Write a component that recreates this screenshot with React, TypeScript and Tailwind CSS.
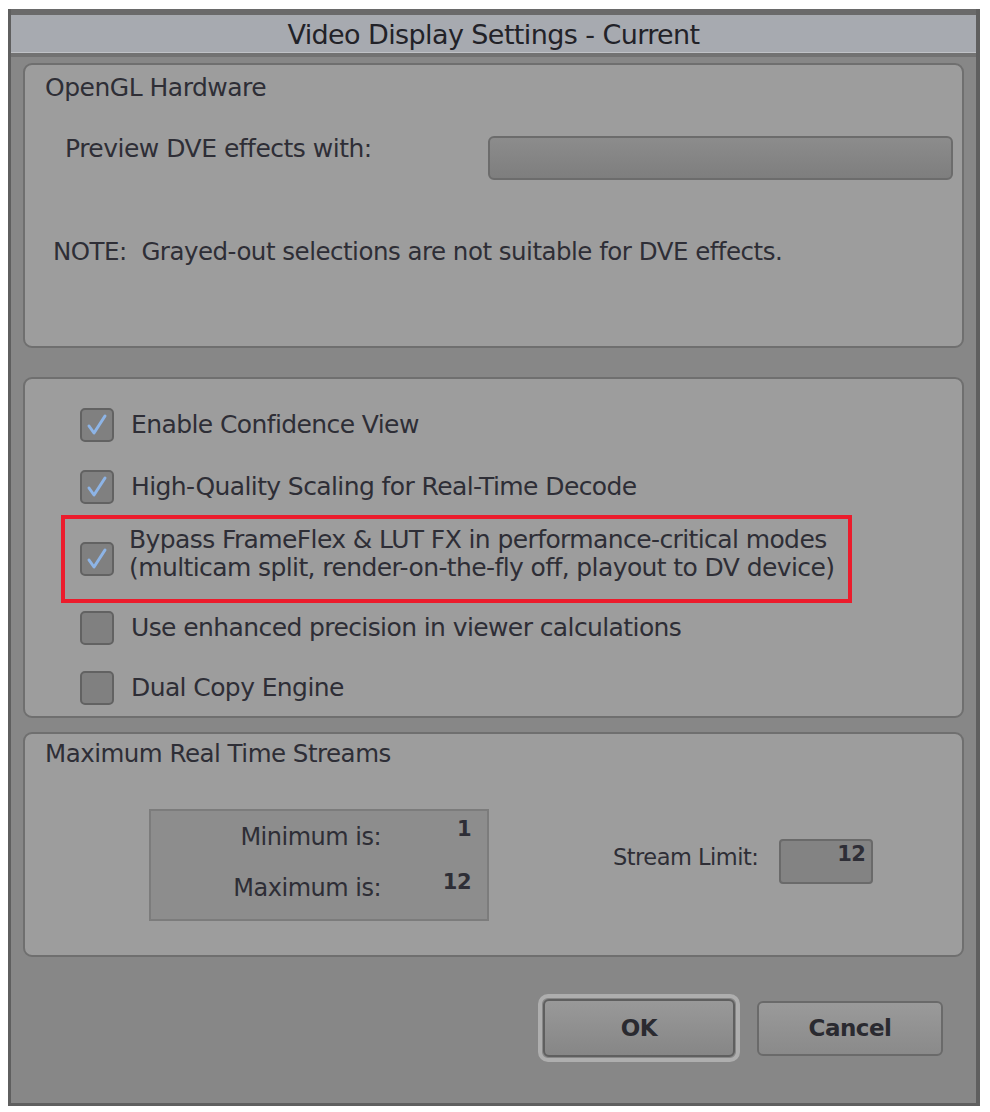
import { FC } from "react";

const font = { fontFamily: '"DejaVu Sans", Verdana, sans-serif' };

const Check: FC<{ checked?: boolean }> = ({ checked }) => (
	<div className="w-[34px] h-[34px] shrink-0 rounded-[5px] border-2 border-[#626262] bg-[#808080] flex items-center justify-center">
		{checked && (
			<svg width="26" height="26" viewBox="0 0 26 26">
				<path
					d="M5 14 L10 21 L21 4"
					fill="none"
					stroke="#8db4e6"
					strokeWidth="3"
					strokeLinecap="round"
					strokeLinejoin="round"
				/>
			</svg>
		)}
	</div>
);

const App: FC = () => {
	return (
		<div className="w-[990px] h-[1112px] bg-white pt-[9px] pl-[8px]" style={font}>
			<div className="w-[972px] h-[1097px] bg-[#6e6e6e] border-l-[3px] border-r-[4px] border-b-[3px] border-[#5f5f5f] flex flex-col">
				<div className="h-[6px] bg-[#6a6a6a]"></div>
				<div className="h-[38px] bg-[#a7aab0] border-b border-[#c0c2c6] flex items-center justify-center pt-[3px] text-[27px] leading-[32px] text-[#222228] tracking-[-0.6px]">
					Video Display Settings - Current
				</div>
				<div className="flex-1 bg-[#878787] border-t-[4px] border-[#727272] px-[12px] pt-[6px] flex flex-col">
					{/* OpenGL Hardware */}
					<div className="h-[285px] rounded-[9px] border-2 border-[#6f6f6f] bg-[#9d9d9d] pl-[20px] pr-[9px] pt-[9px] text-[#2e2e36] tracking-[-0.5px]">
						<p className="text-[25px] leading-[28px]">OpenGL Hardware</p>
						<div className="flex items-start mt-[34px]">
							<span className="pl-[20px] text-[25px] leading-[26px]">Preview DVE effects with:</span>
							<div className="ml-auto w-[465px] h-[44px] rounded-[6px] border-2 border-[#6c6c6c] bg-gradient-to-b from-[#8c8c8c] to-[#7e7e7e]"></div>
						</div>
						<p className="pl-[8px] mt-[57px] text-[24.5px] leading-[30px]">
							NOTE:&nbsp; Grayed-out selections are not suitable for DVE effects.
						</p>
					</div>

					{/* Options */}
					<div className="mt-[29px] h-[341px] rounded-[9px] border-2 border-[#6f6f6f] bg-[#9d9d9d] pl-[55px] pt-[29px] flex flex-col text-[25px] leading-[30px] text-[#2e2e36] tracking-[-0.6px]">
						<div className="flex items-center gap-[17px]">
							<Check checked />
							<span>Enable Confidence View</span>
						</div>
						<div className="flex items-center gap-[17px] mt-[28px]">
							<Check checked />
							<span>High-Quality Scaling for Real-Time Decode</span>
						</div>
						<div className="-ml-[19px] mt-[11px] w-[791px] h-[88px] border-[4px] border-[#ec1c2c] pl-[15px] flex items-center gap-[15px]">
							<Check checked />
							<span className="leading-[28px] -mt-[10px]">
								Bypass FrameFlex &amp; LUT FX in performance-critical modes
								<br />
								(multicam split, render-on-the-fly off, playout to DV device)
							</span>
						</div>
						<div className="flex items-center gap-[17px] mt-[8px]">
							<Check />
							<span>Use enhanced precision in viewer calculations</span>
						</div>
						<div className="flex items-center gap-[17px] mt-[26px]">
							<Check />
							<span>Dual Copy Engine</span>
						</div>
					</div>

					{/* Streams */}
					<div className="mt-[14px] h-[225px] rounded-[9px] border-2 border-[#6f6f6f] bg-[#9d9d9d] pl-[20px] pt-[6px] text-[#2e2e36] tracking-[-0.5px]">
						<p className="text-[24.5px] leading-[28px]">Maximum Real Time Streams</p>
						<div className="flex items-start mt-[41px]">
							<div className="ml-[104px] w-[340px] h-[112px] border-2 border-[#7c7c7c] bg-[#8d8d8d] pr-[16px] pt-[3px] text-[24px] leading-[30px]">
								<div className="flex items-start">
									<span className="w-[230px] text-right mt-[8px]">Minimum is:</span>
									<span className="flex-1 text-right font-bold text-[21px]">1</span>
								</div>
								<div className="flex items-start mt-[15px]">
									<span className="w-[230px] text-right mt-[6px]">Maximum is:</span>
									<span className="flex-1 text-right font-bold text-[21px]">12</span>
								</div>
							</div>
							<span className="ml-[124px] mt-[33px] text-[22.5px] leading-[30px]">Stream Limit:</span>
							<div className="ml-[21px] mt-[30px] w-[94px] h-[45px] rounded-[4px] border-2 border-[#6a6a6a] bg-[#838383] text-right pr-[6px] text-[21px] font-bold leading-[26px]">
								12
							</div>
						</div>
					</div>

					{/* Buttons */}
					<div className="flex justify-end items-center mt-[37px] pr-[21px] gap-[17px]">
						<div className="rounded-[10px] border-[4px] border-[#aeaeae] p-[1px]">
							<button className="w-[192px] h-[58px] rounded-[6px] border-2 border-[#5f5f5f] bg-gradient-to-b from-[#999999] to-[#868686] text-[23px] font-bold text-[#2a2a30] tracking-[-0.5px]">
								OK
							</button>
						</div>
						<button className="w-[186px] h-[55px] rounded-[6px] border-2 border-[#6a6a6a] bg-gradient-to-b from-[#9a9a9a] to-[#8a8a8a] text-[23px] font-bold text-[#2a2a30] tracking-[-0.5px]">
							Cancel
						</button>
					</div>
				</div>
			</div>
		</div>
	);
};

export default App;
